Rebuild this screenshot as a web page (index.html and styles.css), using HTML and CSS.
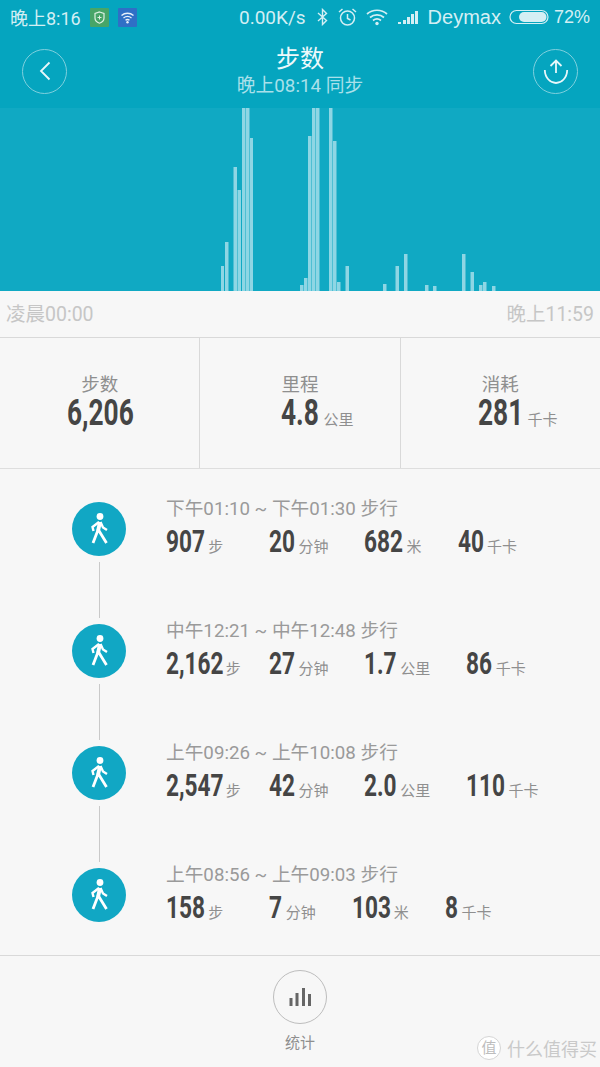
FILE: index.html
```html
<!DOCTYPE html>
<html>
  <head>
    <meta charset="utf-8">
    <title>步数</title>
    <link rel="stylesheet" href="styles.css">
  </head>
  <body>
    <div class="top">
      <div class="status">
        <span class="clock">晚上8:16</span>
        <svg class="app-icon" width="19" height="19" viewBox="0 0 19 19">
          <rect width="19" height="19" rx="1" fill="#47a568"/>
          <path d="M9.5 4 L14 5.5 V10 C14 13 11.5 14.5 9.5 15.2 C7.5 14.5 5 13 5 10 V5.5 Z" fill="none" stroke="#dff2e4" stroke-width="1.2"/>
          <path d="M9.5 7.5 V11.5 M7.5 9.5 H11.5" stroke="#dff2e4" stroke-width="1"/>
        </svg>
        <svg class="app-icon" width="19" height="19" viewBox="0 0 19 19">
          <rect width="19" height="19" rx="1" fill="#2f6fc6"/>
          <path d="M3.5 7.5 C7 4.5 12 4.5 15.5 7.5 M5.5 10 C8 8 11 8 13.5 10 M7.5 12.2 C8.7 11.3 10.3 11.3 11.5 12.2" fill="none" stroke="#e6effa" stroke-width="1.4"/>
          <circle cx="9.5" cy="14.3" r="1.2" fill="#e6effa"/>
        </svg>
        <span class="status-gap"></span>
        <span class="speed">0.00K/s</span>
        <svg class="status-bt" width="11" height="18" viewBox="0 0 11 18">
          <path d="M1 5 L9.500 12.500 L5.500 16.500 V1.500 L9.500 5.500 L1 13" fill="none" stroke="#d4eff4" stroke-width="1.400"/>
        </svg>
        <svg class="status-alarm" width="19" height="20" viewBox="0 0 19 20">
          <circle cx="9.500" cy="11" r="7" fill="none" stroke="#d4eff4" stroke-width="1.500"/>
          <path d="M9.500 7 V11.500 L12.500 13 M1 5 L4.500 2 M18 5 L14.500 2" fill="none" stroke="#d4eff4" stroke-width="1.500"/>
        </svg>
        <svg class="status-wifi" width="22" height="18" viewBox="0 0 22 18">
          <path d="M1 6 C6.500 1 15.500 1 21 6 M4 9.500 C8 6 14 6 18 9.500 M7 12.500 C9.500 10.500 12.500 10.500 15 12.500" fill="none" stroke="#d4eff4" stroke-width="1.700"/>
          <circle cx="11" cy="15.500" r="1.700" fill="#d4eff4"/>
        </svg>
        <svg class="status-signal" width="21" height="14" viewBox="0 0 21 14">
          <path d="M0 12h3v2H0zM5 10h3v4H5zM9 7h3v7H9zM13 4h3v10h-3zM17 1h3v13h-3z" fill="#d4eff4"/>
        </svg>
        <span class="carrier">Deymax</span>
        <svg class="status-battery" width="40" height="16" viewBox="0 0 40 16">
          <rect x="1" y="1.500" width="38" height="13" rx="6.500" fill="none" stroke="#d4eff4" stroke-width="1.200"/>
          <rect x="10" y="3" width="27.500" height="10" rx="5" fill="#d4eff4"/>
        </svg>
        <span class="battery">72%</span>
      </div>
      <div class="title-bar">
        <div class="round-btn">
          <svg width="16" height="22" viewBox="0 0 16 22">
            <path d="M12.500 2.500 L4 11 L12.500 19.500" fill="none" stroke="#e8f7fa" stroke-width="1.800"/>
          </svg>
        </div>
        <div class="title-text">
          <div class="title">步数</div>
          <div class="sync">晚上08:14 同步</div>
        </div>
        <div class="round-btn">
          <svg width="26" height="28" viewBox="0 0 26 28">
            <path d="M13 3.500 V16 M7.500 9 L13 3.500 L18.500 9 M1.800 13 C2 21 7.500 26 13 26 C18.500 26 24 21 24.200 13" fill="none" stroke="#e8f7fa" stroke-width="1.800"/>
          </svg>
        </div>
      </div>
    </div>

    <svg class="chart" width="600" height="183" viewBox="0 108 600 183">
      <g fill="#8ed6e4">
        <rect x="221" y="266" width="3" height="25"/>
        <rect x="225" y="242" width="3.500" height="49"/>
        <rect x="233.500" y="167" width="3.500" height="124"/>
        <rect x="237.500" y="190" width="3.500" height="101"/>
        <rect x="242" y="108" width="3.500" height="183"/>
        <rect x="246" y="108" width="3.500" height="183"/>
        <rect x="250" y="138" width="3" height="153"/>
        <rect x="300" y="285" width="3.500" height="6"/>
        <rect x="304" y="278" width="3.500" height="13"/>
        <rect x="308" y="136" width="3.500" height="155"/>
        <rect x="312" y="108" width="3.500" height="183"/>
        <rect x="316" y="108" width="3.500" height="183"/>
        <rect x="329" y="108" width="3.500" height="183"/>
        <rect x="333" y="141" width="3.500" height="150"/>
        <rect x="337" y="282" width="3.500" height="9"/>
        <rect x="345.500" y="266" width="3.500" height="25"/>
        <rect x="383" y="284" width="3.500" height="7"/>
        <rect x="395.500" y="266" width="3.500" height="25"/>
        <rect x="404" y="254" width="3.500" height="37"/>
        <rect x="425" y="285" width="3.500" height="6"/>
        <rect x="433" y="286" width="3.500" height="5"/>
        <rect x="462" y="254" width="3.500" height="37"/>
        <rect x="470.500" y="272" width="3.500" height="19"/>
        <rect x="479" y="285" width="3.500" height="6"/>
        <rect x="483" y="282" width="3.500" height="9"/>
        <rect x="492" y="286" width="3.500" height="5"/>
      </g>
    </svg>

    <div class="range">
      <span>凌晨00:00</span>
      <span>晚上11:59</span>
    </div>

    <div class="summary">
      <div class="summary-cell">
        <div class="summary-label">步数</div>
        <div class="summary-value"><b class="num-comma">6,206</b></div>
      </div>
      <div class="summary-cell">
        <div class="summary-label">里程</div>
        <div class="summary-value"><b class="num-dec">4.8</b><i>公里</i></div>
      </div>
      <div class="summary-cell">
        <div class="summary-label">消耗</div>
        <div class="summary-value"><b class="num-3">281</b><i>千卡</i></div>
      </div>
    </div>

    <div class="list">
      <div class="walk">
        <div class="walk-mark">
          <div class="walk-icon">
            <svg width="24" height="34" viewBox="0 0 24 34"><use href="#walker"/></svg>
          </div>
        </div>
        <div class="walk-body">
          <div class="walk-time">下午01:10 ~ 下午01:30 步行</div>
          <div class="walk-stats">
            <span class="walk-steps"><b class="num-3">907</b><i>步</i></span>
            <span><b class="num-2">20</b><i>分钟</i></span>
            <span><b class="num-3">682</b><i>米</i></span>
            <span><b class="num-2">40</b><i>千卡</i></span>
          </div>
        </div>
      </div>
      <div class="walk">
        <div class="walk-mark">
          <div class="walk-icon">
            <svg width="24" height="34" viewBox="0 0 24 34"><use href="#walker"/></svg>
          </div>
        </div>
        <div class="walk-body">
          <div class="walk-time">中午12:21 ~ 中午12:48 步行</div>
          <div class="walk-stats">
            <span class="walk-steps"><b class="num-comma">2,162</b><i>步</i></span>
            <span><b class="num-2">27</b><i>分钟</i></span>
            <span><b class="num-dec">1.7</b><i>公里</i></span>
            <span><b class="num-2">86</b><i>千卡</i></span>
          </div>
        </div>
      </div>
      <div class="walk">
        <div class="walk-mark">
          <div class="walk-icon">
            <svg width="24" height="34" viewBox="0 0 24 34"><use href="#walker"/></svg>
          </div>
        </div>
        <div class="walk-body">
          <div class="walk-time">上午09:26 ~ 上午10:08 步行</div>
          <div class="walk-stats">
            <span class="walk-steps"><b class="num-comma">2,547</b><i>步</i></span>
            <span><b class="num-2">42</b><i>分钟</i></span>
            <span><b class="num-dec">2.0</b><i>公里</i></span>
            <span><b class="num-3">110</b><i>千卡</i></span>
          </div>
        </div>
      </div>
      <div class="walk">
        <div class="walk-mark">
          <div class="walk-icon">
            <svg width="24" height="34" viewBox="0 0 24 34"><use href="#walker"/></svg>
          </div>
        </div>
        <div class="walk-body">
          <div class="walk-time">上午08:56 ~ 上午09:03 步行</div>
          <div class="walk-stats">
            <span class="walk-steps"><b class="num-3">158</b><i>步</i></span>
            <span><b class="num-1">7</b><i>分钟</i></span>
            <span><b class="num-3">103</b><i>米</i></span>
            <span><b class="num-1">8</b><i>千卡</i></span>
          </div>
        </div>
      </div>
    </div>

    <div class="footer">
      <div class="stats-btn">
        <svg width="23" height="20" viewBox="0 0 23 20">
          <path d="M0.500 11h3v8h-3zM6.500 6h3v13h-3zM13 1h3v18h-3zM19 7h3v12h-3z" fill="#666"/>
        </svg>
      </div>
      <div class="stats-label">统计</div>
      <div class="watermark">
        <span class="watermark-mark">值</span>
        <span>什么值得买</span>
      </div>
    </div>

    <svg width="0" height="0" class="defs">
      <defs>
        <g id="walker">
          <circle cx="13" cy="4.500" r="3.400" fill="#fff"/>
          <path d="M13 10 L11 19" fill="none" stroke="#fff" stroke-width="3.800"/>
          <path d="M11 18 L6 31 M11.500 18 L19.500 31" fill="none" stroke="#fff" stroke-width="2.800"/>
          <path d="M12 10 L5.500 15 L6.500 19 M13.500 10 L16 15.500 L20 18" fill="none" stroke="#fff" stroke-width="2.400"/>
        </g>
      </defs>
    </svg>
  </body>
</html>
```

FILE: styles.css
```css
html, body {
  margin: 0;
  padding: 0;
}

body {
  width: 600px;
  height: 1067px;
  overflow: hidden;
  background: #f7f7f7;
  font-family: Roboto, "Noto Sans CJK SC", sans-serif;
  color: #9a9a9a;
}

b, i {
  font-style: normal;
  font-weight: normal;
}

/* no condensed font here, so the numbers are squeezed and their width set by digit count */
b {
  display: inline-block;
  font-family: Roboto, sans-serif;
  font-weight: bold;
  color: #454545;
  white-space: nowrap;
  transform: scaleX(.73);
  transform-origin: 0 50%;
}

.num-1 { width: .41em; }
.num-2 { width: .82em; }
.num-3 { width: 1.23em; }
.num-dec { width: 1.03em; }
.num-comma { width: 1.8em; }

.top {
  height: 108px;
  background: #05a5bf;
}

.status {
  display: flex;
  align-items: center;
  height: 34px;
  padding: 0 10px;
  color: #d4eff4;
  font-size: 18px;
}

.app-icon {
  margin-left: 9px;
}

.status-gap {
  flex: 1;
}

.speed {
  font-size: 19px;
}

.status-bt {
  margin-left: 11px;
}

.status-alarm {
  margin-left: 10px;
}

.status-wifi {
  margin-left: 9px;
}

.status-signal {
  margin-left: 10px;
}

.carrier {
  margin-left: 9px;
  font-size: 20px;
  font-family: "Liberation Sans", sans-serif;
}

.status-battery {
  margin-left: 8px;
}

.battery {
  margin-left: 5px;
  font-family: "Liberation Sans", sans-serif;
}

.title-bar {
  display: flex;
  align-items: center;
  justify-content: space-between;
  padding: 0 22px;
  height: 74px;
}

.round-btn {
  display: flex;
  align-items: center;
  justify-content: center;
  width: 43px;
  height: 43px;
  border: 1px solid #7fd0de;
  border-radius: 50%;
}

.title-text {
  text-align: center;
}

.title {
  font-size: 24px;
  line-height: 30px;
  color: #eef9fb;
}

.sync {
  font-size: 18.75px;
  line-height: 24px;
  color: #a9e0ea;
}

.chart {
  display: block;
  background: #10a9c3;
}

.range {
  display: flex;
  justify-content: space-between;
  align-items: center;
  height: 46px;
  padding: 0 6px 4px;
  box-sizing: border-box;
  font-size: 19.5px;
  color: #c6c6c6;
}

.summary {
  display: flex;
  height: 130px;
  border-top: 1px solid #d9d9d9;
  border-bottom: 1px solid #dedede;
}

.summary-cell {
  flex: 1 1 0;
  box-sizing: border-box;
  padding-top: 35px;
  text-align: center;
  border-right: 1px solid #d9d9d9;
}

.summary-cell:last-child {
  border-right: 0;
}

.summary-label {
  font-size: 18.5px;
  line-height: 24px;
  color: #8f8f8f;
}

.summary-value {
  font-size: 36px;
  line-height: 32px;
}

.summary-value b {
  line-height: 32px;
}

/* the unit hangs to the right, only the number is centred */
.summary-value i {
  display: inline-block;
  width: 0;
  margin: 0 -5px 0 5px;
  font-size: 15px;
  white-space: nowrap;
  color: #8f8f8f;
}

.list {
  height: 486px;
  padding-top: 33px;
  box-sizing: border-box;
}

.walk {
  display: flex;
  height: 122px;
}

.walk-mark {
  position: relative;
  width: 54px;
  margin: 0 40px 0 72px;
}

.walk-mark::after {
  content: "";
  position: absolute;
  left: 27px;
  top: 60px;
  width: 1px;
  height: 56px;
  background: #c9c9c9;
}

.walk:last-child .walk-mark::after {
  display: none;
}

.walk-icon {
  display: flex;
  align-items: center;
  justify-content: center;
  width: 54px;
  height: 54px;
  border-radius: 50%;
  background: #11a7c4;
}

.walk-body {
  margin-top: -6px;
}

.walk-time {
  font-size: 18.7px;
  line-height: 26px;
  color: #9a9a9a;
}

.walk-stats {
  display: flex;
  gap: 36px;
  margin-top: 3px;
  font-size: 31px;
  line-height: 34px;
}

.walk-steps {
  flex: 0 0 67px;
  min-width: 0;
  white-space: nowrap;
}

.walk-stats i {
  margin-left: 4px;
  font-size: 15px;
  color: #8f8f8f;
}

.footer {
  position: relative;
  height: 111px;
  border-top: 1px solid #d9d9d9;
  text-align: center;
}

.stats-btn {
  display: flex;
  align-items: center;
  justify-content: center;
  width: 52px;
  height: 52px;
  margin: 14px auto 0;
  border: 1px solid #bdbdbd;
  border-radius: 50%;
}

.stats-label {
  margin-top: 7px;
  font-size: 15px;
  color: #8f8f8f;
}

.watermark {
  position: absolute;
  right: 3px;
  bottom: 6px;
  display: flex;
  align-items: center;
  gap: 6px;
  font-size: 18px;
  color: #c9c9c9;
}

.watermark-mark {
  width: 22px;
  height: 22px;
  font-size: 15px;
  line-height: 22px;
  color: #bdbdbd;
  background: #fff;
  border: 1px solid #d5d5d5;
  border-radius: 50%;
}

.defs {
  position: absolute;
}
```
